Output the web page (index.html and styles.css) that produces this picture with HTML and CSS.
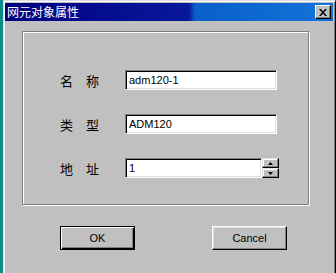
FILE: index.html
```html
<!DOCTYPE html>
<html>
	<head>
		<link rel="stylesheet" href="styles.css">
	</head>
	<body>
	<div class="screen">
		<div class="desk"></div>
		<div class="win">
			<div class="titlebar">
				<span class="title">网元对象属性</span>
				<span class="close">
					<svg width="8" height="7" viewBox="0 0 8 7"><path d="M0 0h2l2 2.5L6 0h2L5 3.5 8 7H6L4 4.5 2 7H0l3-3.5z" fill="#000"/></svg>
				</span>
			</div>
			<div class="content">
				<div class="group">
					<div class="row">
						<span class="label">名　称</span>
						<div class="field">adm120-1</div>
					</div>
					<div class="row">
						<span class="label">类　型</span>
						<div class="field">ADM120</div>
					</div>
					<div class="row">
						<span class="label">地　址</span>
						<div class="field short">1</div>
						<div class="spin">
							<span class="spin-btn"><svg width="5" height="3" viewBox="0 0 5 3"><path d="M2.5 0L5 3H0z" fill="#000"/></svg></span>
							<span class="spin-btn"><svg width="5" height="3" viewBox="0 0 5 3"><path d="M0 0h5L2.5 3z" fill="#000"/></svg></span>
						</div>
					</div>
				</div>
				<div class="buttons">
					<button class="btn default">OK</button>
					<button class="btn">Cancel</button>
				</div>
			</div>
		</div>
	</div>
	</body>
</html>
```

FILE: styles.css
```css
body{
	margin: 0;
	background-color: #c0c0c0;
	font-family: "Liberation Sans", Arial, sans-serif;
}
.screen{
	display: flex;
	height: 273px;
	overflow: hidden;
}
.desk{
	width: 3px;
	background-color: #0a8c8c;
}
.win{
	flex: 1;
	background-color: #c0c0c0;
	border-top: 1px solid #dfdfdf;
	border-left: 1px solid #dfdfdf;
	border-right: 1px solid #000;
	padding: 2px 2px 0 1px;
	box-shadow: inset 1px 1px 0 #fff, inset -1px 0 0 #808080;
}
.titlebar{
	height: 18px;
	display: flex;
	align-items: center;
	justify-content: space-between;
	padding: 0 2px;
	background: linear-gradient(to right, #000080 0%, #08189a 56%, #0a5fc8 58%, #1174d8 100%);
}
.title{
	color: white;
	font-family: "Noto Sans CJK SC", sans-serif;
	font-size: 12px;
	line-height: 18px;
}
.close{
	width: 16px;
	height: 14px;
	box-sizing: border-box;
	background-color: #c0c0c0;
	border: 1px solid;
	border-color: #fff #000 #000 #fff;
	box-shadow: inset -1px -1px 0 #808080;
	display: flex;
	align-items: center;
	justify-content: center;
}
.content{
	padding: 10px 0 0 17px;
}
.group{
	width: 287px;
	height: 174px;
	box-sizing: border-box;
	border: 1px solid #808080;
	box-shadow: 1px 1px 0 #fff, inset 1px 1px 0 #fff;
	padding: 38px 0 0 37px;
	display: flex;
	flex-direction: column;
	gap: 24px;
}
.row{
	display: flex;
	align-items: center;
	height: 20px;
}
.label{
	width: 65px;
	font-family: "Noto Sans CJK SC", sans-serif;
	font-size: 13px;
	color: #000;
}
.field{
	width: 152px;
	height: 20px;
	box-sizing: border-box;
	background-color: white;
	border: 1px solid;
	border-color: #808080 #fff #fff #808080;
	box-shadow: inset 1px 1px 0 #000, inset -1px -1px 0 #dfdfdf;
	font-size: 11px;
	line-height: 18px;
	padding-left: 3px;
}
.field.short{
	width: 137px;
}
.spin{
	display: flex;
	flex-direction: column;
}
.spin-btn{
	width: 17px;
	height: 10px;
	box-sizing: border-box;
	background-color: #c0c0c0;
	border: 1px solid;
	border-color: #dfdfdf #000 #000 #dfdfdf;
	box-shadow: inset -1px -1px 0 #808080, inset 1px 1px 0 #fff;
	display: flex;
	align-items: center;
	justify-content: center;
}
.buttons{
	display: flex;
	gap: 77px;
	padding-left: 38px;
	margin-top: 21px;
}
.btn{
	width: 75px;
	height: 24px;
	padding: 0;
	font-family: "Liberation Sans", Arial, sans-serif;
	font-size: 11px;
	color: #000;
	background-color: #c0c0c0;
	border: 1px solid;
	border-color: #fff #000 #000 #fff;
	box-shadow: inset -1px -1px 0 #808080, inset 1px 1px 0 #dfdfdf;
}
.btn.default{
	border: 1px solid #000;
	box-shadow: inset 1px 1px 0 #fff, inset -1px -1px 0 #000, inset -2px -2px 0 #808080;
}
```
